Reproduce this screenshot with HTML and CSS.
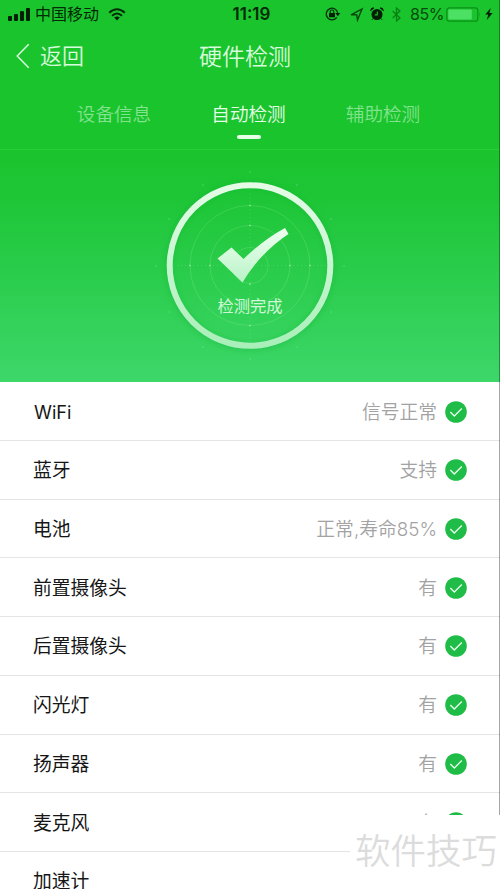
FILE: index.html
```html
<!DOCTYPE html>
<html lang="zh-CN">
<head>
<meta charset="utf-8">
<title>硬件检测</title>
<link rel="stylesheet" href="styles.css">
</head>
<body>
<div class="screen">
  <header class="hero">
    <div class="status">
      <div class="status-left">
        <svg class="signal" viewBox="0 0 23 14"><rect x="0" y="9" width="4" height="5" rx="1"/><rect x="6" y="7" width="4" height="7" rx="1"/><rect x="12" y="4" width="4" height="10" rx="1"/><rect x="18" y="1" width="4" height="13" rx="1"/></svg>
        <span class="carrier">中国移动</span>
        <svg class="wifi" viewBox="0 0 18 13"><path d="M1.2 4.7Q9-2.2 16.8 4.7M4 7.7Q9 3.2 14 7.7" fill="none" stroke="#032a06" stroke-width="2"/><path d="M6.2 9.6Q9 7.5 11.8 9.6L9 12.4Z"/></svg>
      </div>
      <span class="clock">11:19</span>
      <div class="status-right">
        <svg class="lock" viewBox="0 0 16 14"><path d="M11.8 10.300A5.800 5.800 0 1 1 12.700 5.800" fill="none" stroke="#052d08" stroke-width="1.300"/><path d="M10.300 6h5l-2.500 3.200z"/><rect x="4" y="6" width="6" height="4.300" rx=".5"/><path d="M5.200 6V4.800a1.800 1.800 0 0 1 3.600 0V6" fill="none" stroke="#052d08" stroke-width="1.100"/></svg>
        <svg class="arrow" viewBox="0 0 13 13"><path d="M1 6.800L12 1 7.500 12 6.700 6.800Z" fill="none" stroke="#07460c" stroke-width="1.400"/></svg>
        <svg class="alarm" viewBox="0 0 14 14"><circle cx="7" cy="7.500" r="5.500"/><path d="M.6 3.700A3 3 0 0 1 4 .9ZM13.400 3.700A3 3 0 0 0 10 .9ZM3 11.500L1.800 13M11 11.500L12.200 13" stroke="#021e04" stroke-width=".8"/><path d="M7.300 4.500v3.400H4.800" fill="none" stroke="#1bc32e" stroke-width="1.100"/></svg>
        <svg class="bluetooth" viewBox="0 0 9 15"><path d="M.7 4l7.300 7-3.500 3V1L8 4l-7.300 7" fill="none" stroke="#087d13" stroke-width="1.200"/></svg>
        <span class="percent">85%</span>
        <svg class="battery" viewBox="0 0 36 15"><rect x=".8" y=".8" width="31" height="13.400" rx="2.500" fill="none" stroke="#0b9018" stroke-width="1.200"/><rect x="2.300" y="2.500" width="23.500" height="10" rx="1" fill="#4ce164"/><path d="M33.500 5.300q1.800 2.200 0 4.400z" fill="#0b9018"/></svg>
        <svg class="bolt" viewBox="0 0 8 12"><path d="M5.700 0L.3 6.600h3L1.800 12 7.600 5H4.400Z"/></svg>
      </div>
    </div>
    <nav class="bar">
      <div class="back"><svg viewBox="0 0 14 26"><path d="M12.700 1.200L1.200 13l11.500 11.800" fill="none" stroke="#dcffe0" stroke-width="1.500"/></svg><span>返回</span></div>
      <h1 class="title">硬件检测</h1>
    </nav>
    <div class="tabs">
      <span class="tab">设备信息</span>
      <span class="tab active">自动检测</span>
      <span class="tab">辅助检测</span>
    </div>
    <div class="result">
      <svg class="dial" viewBox="0 0 200 200">
        <defs>
          <linearGradient id="ring" x1="0" y1="0" x2="0" y2="1"><stop offset="0" stop-color="#e5fbe7"/><stop offset="1" stop-color="#a9efb9"/></linearGradient>
          <linearGradient id="tick" x1="0" y1="0" x2="0" y2="1"><stop offset="0" stop-color="#f0fff2"/><stop offset="1" stop-color="#b9f3c6"/></linearGradient>
          <filter id="glow" x="-20%" y="-20%" width="140%" height="140%"><feGaussianBlur stdDeviation="3"/></filter>
        </defs>
        <circle cx="100" cy="101" r="81" fill="none" stroke="#0aa62a" stroke-opacity=".3" stroke-width="7" filter="url(#glow)"/>
        <g fill="none" stroke="#a4f4ad" stroke-opacity=".3" stroke-width=".7"><circle cx="100" cy="100.500" r="60"/><circle cx="100" cy="100.500" r="40"/><circle cx="100" cy="100.500" r="18"/></g>
        <path d="M23 100.500H177M100 24V177" stroke="#a4f4ad" stroke-opacity=".3" stroke-width=".8" stroke-dasharray="1 3"/>
        <g fill="#b8f8bf" fill-opacity=".5"><circle cx="100" cy="40.500" r="1"/><circle cx="100" cy="60.500" r="1"/><circle cx="100" cy="160.500" r="1"/><circle cx="100" cy="119" r="1"/><circle cx="40" cy="100.500" r="1"/><circle cx="60" cy="100.500" r="1"/><circle cx="140" cy="100.500" r="1"/><circle cx="160" cy="100.500" r="1"/></g>
        <g fill="#a4f4ad" fill-opacity=".22"><circle cx="100" cy="7" r="1"/><circle cx="53" cy="20" r="1"/><circle cx="147" cy="20" r="1"/><circle cx="19" cy="54" r="1"/><circle cx="181" cy="54" r="1"/><circle cx="6" cy="101" r="1"/><circle cx="194" cy="101" r="1"/><circle cx="19" cy="147" r="1"/><circle cx="181" cy="147" r="1"/><circle cx="53" cy="182" r="1"/><circle cx="147" cy="182" r="1"/><circle cx="100" cy="194" r="1"/></g>
        <circle cx="100" cy="100.500" r="80.300" fill="none" stroke="url(#ring)" stroke-width="6"/>
        <path d="M67.500 93.500L81.500 82.500 93.500 94Q113 75 135 63L138.500 69Q110 88 92.500 117.500Z" fill="url(#tick)"/>
      </svg>
      <span class="done">检测完成</span>
    </div>
  </header>
  <svg class="defs"><symbol id="ok" viewBox="0 0 22 22"><circle cx="11" cy="11" r="10.800" fill="#1fbc47"/><path d="M5.300 11l4 4 7.500-7.500" fill="none" stroke="#e8ffed" stroke-width="1.300"/></symbol></svg>
  <main class="list">
    <div class="row"><span class="name latin">WiFi</span><span class="value">信号正常</span><svg class="ok"><use href="#ok"/></svg></div>
    <div class="row"><span class="name">蓝牙</span><span class="value">支持</span><svg class="ok"><use href="#ok"/></svg></div>
    <div class="row"><span class="name">电池</span><span class="value">正常,寿命<span class="num">85%</span></span><svg class="ok"><use href="#ok"/></svg></div>
    <div class="row"><span class="name">前置摄像头</span><span class="value">有</span><svg class="ok"><use href="#ok"/></svg></div>
    <div class="row"><span class="name">后置摄像头</span><span class="value">有</span><svg class="ok"><use href="#ok"/></svg></div>
    <div class="row"><span class="name">闪光灯</span><span class="value">有</span><svg class="ok"><use href="#ok"/></svg></div>
    <div class="row"><span class="name">扬声器</span><span class="value">有</span><svg class="ok"><use href="#ok"/></svg></div>
    <div class="row"><span class="name">麦克风</span><span class="value">有</span><svg class="ok"><use href="#ok"/></svg></div>
    <div class="row"><span class="name">加速计</span></div>
  </main>
  <div class="edge"></div>
  <div class="watermark">软件技巧</div>
</div>
</body>
</html>
```
FILE: styles.css
```css
* { box-sizing: border-box; }
body { margin: 0; font-family: Inter, "Noto Sans CJK SC", sans-serif; background: #fff; }
svg { display: block; flex: none; overflow: visible; }
.screen { position: relative; width: 500px; height: 889px; overflow: hidden; background: #fff; }
.defs { position: absolute; width: 0; height: 0; }
.hero { height: 382.400px; background: linear-gradient(#1ac42d 0, #1ac42d 150px, #1ec637 200px, #3dd76a 382px); }
.status { height: 28px; display: grid; grid-template-columns: 200px 103px 197px; align-items: center; color: #032a06; fill: #021e04; }
.status-left, .status-right { display: flex; align-items: center; }
.status-left { padding-left: 8px; }
.signal { width: 23px; height: 14px; }
.carrier { margin-left: 4px; font-size: 16px; line-height: 24px; }
.wifi { width: 18px; height: 13px; margin-left: 9px; }
.clock { text-align: center; font-size: 17px; font-weight: 600; }
.status-right { padding-left: 22px; }
.lock { width: 16px; height: 14px; }
.arrow { width: 13px; height: 13px; margin-left: 9px; }
.alarm { width: 14px; height: 14px; margin-left: 7px; }
.bluetooth { width: 9px; height: 15px; margin-left: 8px; }
.percent { width: 33px; margin-left: 9px; font-size: 16px; letter-spacing: -.5px; white-space: nowrap; color: #064b0c; }
.battery { width: 36px; height: 15px; margin-left: 3px; }
.bolt { width: 8px; height: 12px; margin-left: 3px; }
.bar { height: 56px; display: grid; grid-template-columns: 160px 170px 1fr; align-items: center; color: #d8fbdc; }
.back { display: flex; align-items: center; gap: 10px; padding-left: 16px; font-size: 22px; line-height: 32px; font-weight: 350; }
.back svg { width: 14px; height: 26px; }
.title { margin: 0; padding-top: 1px; text-align: center; font-size: 23px; line-height: 34px; font-weight: 350; }
.tabs { height: 66px; display: flex; justify-content: center; padding-right: 3px; gap: 60px; border-bottom: 1px solid #2bcd3c; font-size: 18.600px; font-weight: 350; }
.tab { width: 74.500px; padding-top: 16px; line-height: 28px; color: #84e38e; white-space: nowrap; text-align: center; }
.active { color: #e6fde8; }
.active::after { content: ""; display: block; width: 24px; height: 4px; margin: 7px auto 0; border-radius: 2px; background: #e6ffe9; }
.result { position: relative; padding: 15px 150px 0; }
.dial { width: 200px; height: 200px; }
.done { position: absolute; left: 150px; top: 144px; width: 200px; line-height: 24px; text-align: center; font-size: 16.300px; color: #d0f8d7; }
.row { height: 58.700px; padding: 1px 33px 0; display: flex; align-items: center; border-bottom: 1px solid #e4e4e4; font-size: 18.800px; line-height: 28px; }
.name { color: #161616; margin-right: auto; padding-top: 2px; }
.latin { font-size: 18.200px; padding: 0 0 0 1px; }
.value { color: #a2a2a2; font-weight: 350; padding-top: 2px; }
.num { letter-spacing: 0; }
.ok { width: 22px; height: 22px; margin-left: 8px; }
.edge { position: absolute; right: 0; top: 0; width: 1px; height: 815px; background: rgba(0,0,0,.35); }
.watermark { position: absolute; right: 0; top: 815px; width: 150px; height: 74px; padding: 10px 0 0 5px; background: #fff; color: #dcdcdc; font-size: 35.500px; line-height: 54px; font-weight: 350; white-space: nowrap; }
```
